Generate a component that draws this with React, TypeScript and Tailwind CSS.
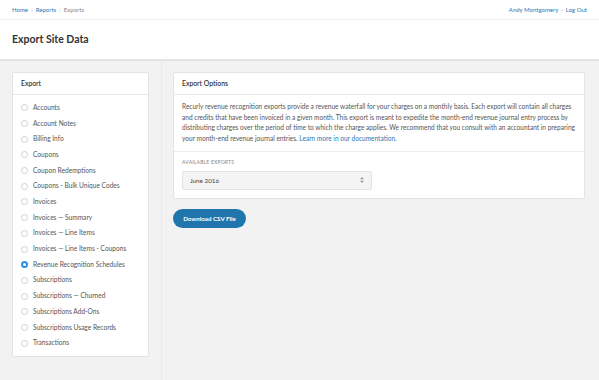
import { useState } from "react";

const exportTypes = [
  "Accounts",
  "Account Notes",
  "Billing Info",
  "Coupons",
  "Coupon Redemptions",
  "Coupons - Bulk Unique Codes",
  "Invoices",
  "Invoices — Summary",
  "Invoices — Line Items",
  "Invoices — Line Items - Coupons",
  "Revenue Recognition Schedules",
  "Subscriptions",
  "Subscriptions — Churned",
  "Subscriptions Add-Ons",
  "Subscriptions Usage Records",
  "Transactions",
];

function Radio({ checked }: { checked: boolean }) {
  if (checked) {
    return (
      <span className="flex h-[7px] w-[7px] items-center justify-center rounded-full bg-[#2f8ee8]">
        <span className="h-[2.5px] w-[2.5px] rounded-full bg-white" />
      </span>
    );
  }
  return (
    <span className="h-[7px] w-[7px] rounded-full border border-[#cfcfcf] bg-white" />
  );
}

export default function App() {
  const [selected, setSelected] = useState<string>("Revenue Recognition Schedules");

  return (
    <div
      className="flex min-h-screen flex-col bg-[#f2f2f2] text-[#444]"
      style={{ fontFamily: "Lato, 'Open Sans', sans-serif" }}
    >
      {/* Cabeçalho */}
      <header className="bg-white shadow-[0_1px_1px_rgba(0,0,0,0.06)]">
        <div className="flex h-[20px] items-center justify-between border-b border-[#f0f0f0] px-[12px] text-[6px]">
          <div className="flex items-center gap-[3px]">
            <a className="text-[#2a78b3]">Home</a>
            <span className="text-[#bbb]">›</span>
            <a className="text-[#2a78b3]">Reports</a>
            <span className="text-[#bbb]">›</span>
            <span className="text-[#888]">Exports</span>
          </div>
          <div className="flex items-center gap-[3px]">
            <a className="text-[#2a78b3]">Andy Montgomery</a>
            <span className="text-[#999]">·</span>
            <a className="text-[#2a78b3]">Log Out</a>
          </div>
        </div>
        <div className="flex h-[40px] items-center border-b border-[#e4e4e4] px-[12px]">
          <h1 className="text-[10.5px] font-bold text-[#333]">Export Site Data</h1>
        </div>
      </header>

      <main className="flex flex-1">
        {/* Lista de exportações */}
        <aside className="w-[162px] shrink-0 border-r border-[#e8e8e8] px-[12px] pt-[12px]">
          <div className="w-[137px] rounded-[2px] border border-[#e4e4e4] bg-white">
            <div className="flex h-[22px] items-center border-b border-[#e8e8e8] px-[8px] text-[6.8px] font-semibold text-[#333]">
              Export
            </div>
            <ul className="py-[5px]">
              {exportTypes.map((type) => (
                <li
                  key={type}
                  onClick={() => setSelected(type)}
                  className="flex h-[15.7px] cursor-pointer items-center gap-[5px] px-[8px] text-[6.6px] text-[#555]"
                >
                  <Radio checked={selected === type} />
                  {type}
                </li>
              ))}
            </ul>
          </div>
        </aside>

        {/* Opções */}
        <section className="flex-1 pl-[11px] pr-[14px] pt-[12px]">
          <div className="rounded-[2px] border border-[#e4e4e4] bg-white">
            <div className="flex h-[22px] items-center border-b border-[#e8e8e8] px-[8px] text-[6.8px] font-semibold text-[#333]">
              Export Options
            </div>
            <div className="px-[8px] py-[7px] text-[6.55px] leading-[10.6px] text-[#555]">
              <p>
                Recurly revenue recognition exports provide a revenue waterfall for your charges on a
                monthly basis. Each export will contain all charges and credits that have been invoiced
                in a given month. This export is meant to expedite the month-end revenue journal entry
                process by distributing charges over the period of time to which the charge applies. We
                recommend that you consult with an accountant in preparing your month-end revenue journal
                entries. <a className="text-[#2a78b3]">Learn more in our documentation</a>.
              </p>
            </div>
            <div className="border-t border-[#ececec] px-[8px] pb-[8px] pt-[7px]">
              <div className="text-[5px] uppercase tracking-[0.2px] text-[#888]">Available Exports</div>
              <div className="mt-[4px] flex h-[19px] w-[190px] items-center justify-between rounded-[2px] border border-[#e2e2e2] bg-[#f4f4f4] px-[7px] text-[6.3px] text-[#444]">
                <span>June 2016</span>
                <svg width="4" height="6" viewBox="0 0 4 6" fill="#999">
                  <path d="M2 0 L4 2.3 H0 Z" />
                  <path d="M2 6 L4 3.7 H0 Z" />
                </svg>
              </div>
            </div>
          </div>

          <button
            type="button"
            className="mt-[10px] flex h-[19px] w-[73px] items-center justify-center rounded-full bg-[#2075ad] text-[6.2px] font-bold text-white"
          >
            Download CSV File
          </button>
        </section>
      </main>
    </div>
  );
}
